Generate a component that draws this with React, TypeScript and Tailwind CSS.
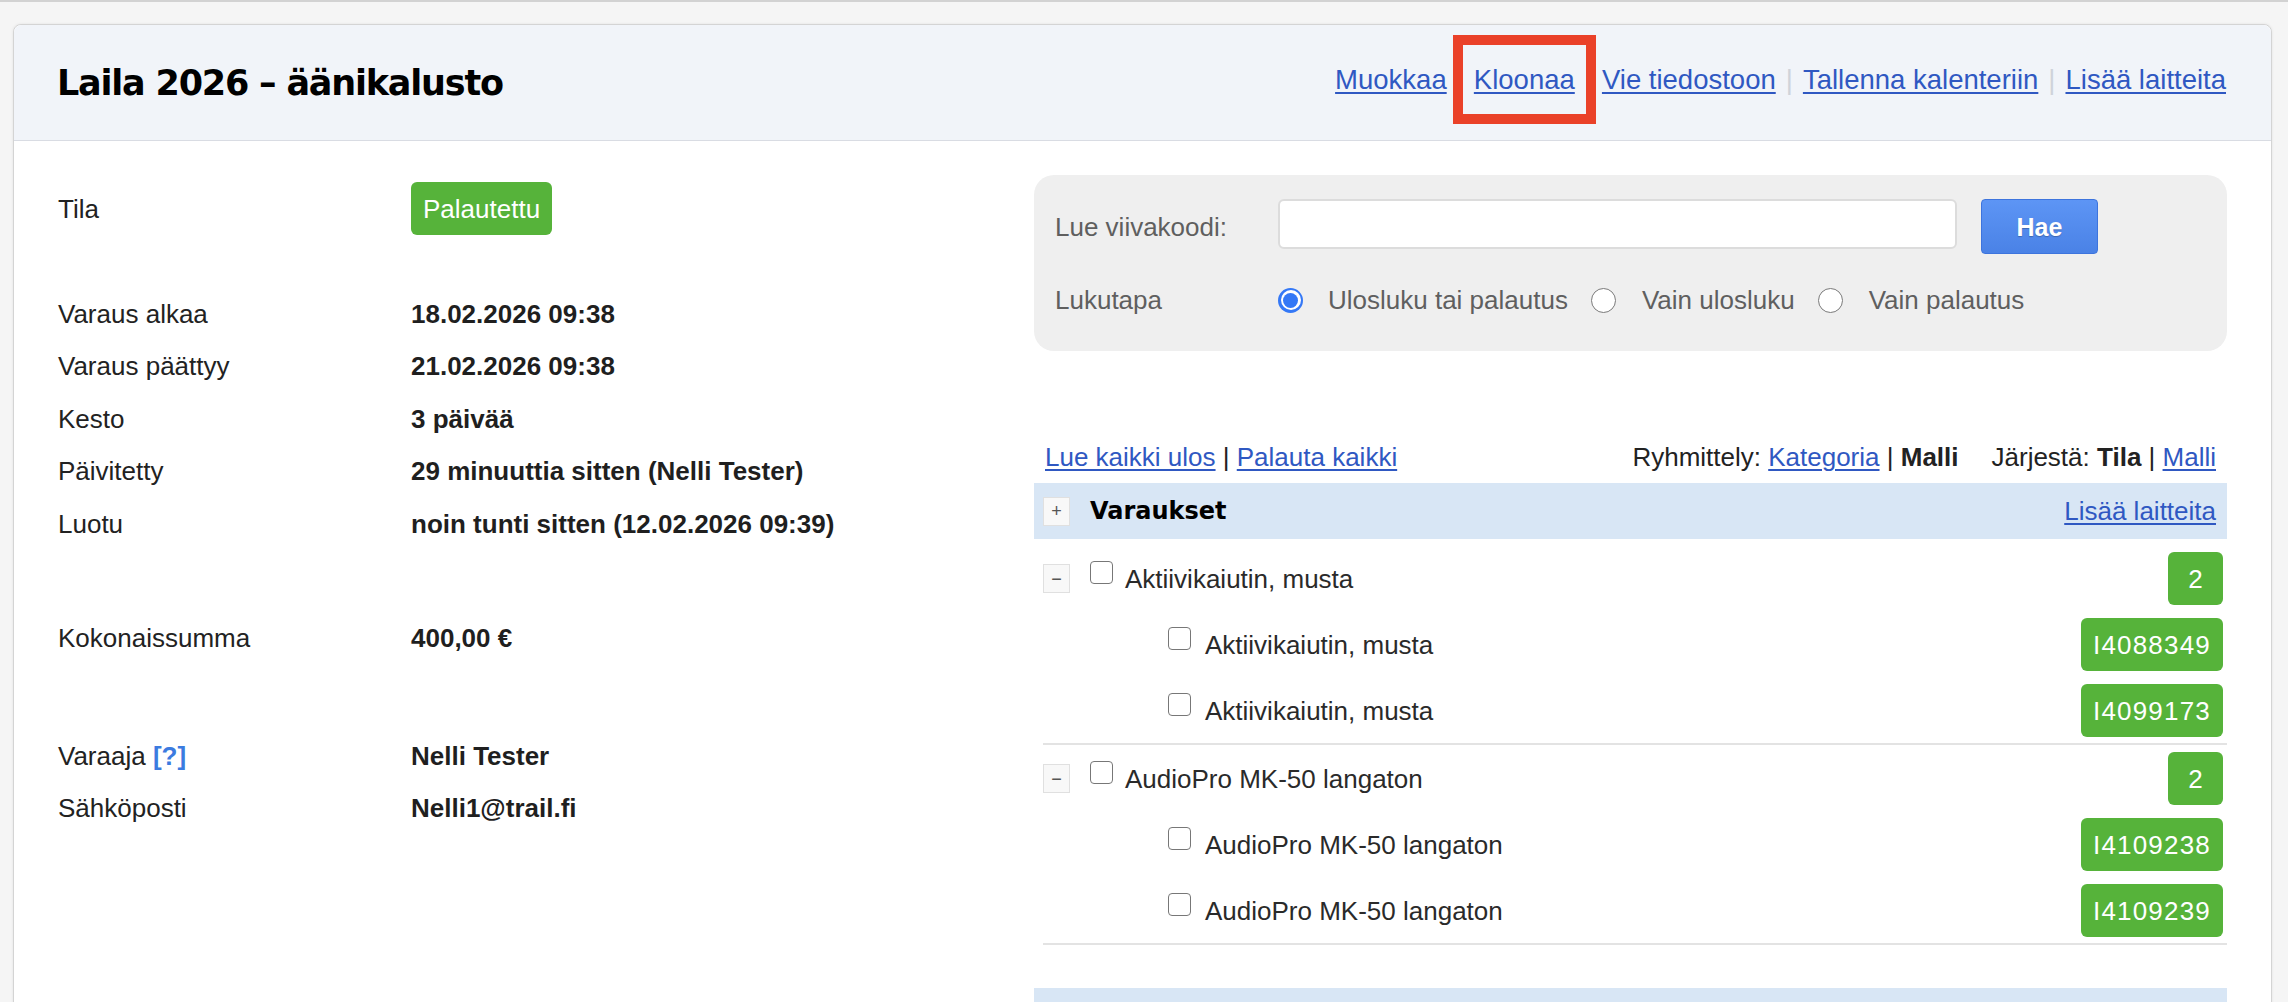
import React from 'react'

const SANS = 'font-["Liberation_Sans",Arial,sans-serif]'
const HEAD = 'font-["DejaVu_Sans",sans-serif]'

const LINK = 'text-[#2f58c2] underline underline-offset-[3px] decoration-[2px]'

const HEADER_LINKS = ['Muokkaa', 'Kloonaa', 'Vie tiedostoon', 'Tallenna kalenteriin', 'Lisää laitteita']

const GROUPS = [
  {
    name: 'Aktiivikaiutin, musta',
    count: 2,
    items: [
      { name: 'Aktiivikaiutin, musta', code: 'I4088349' },
      { name: 'Aktiivikaiutin, musta', code: 'I4099173' },
    ],
  },
  {
    name: 'AudioPro MK-50 langaton',
    count: 2,
    items: [
      { name: 'AudioPro MK-50 langaton', code: 'I4109238' },
      { name: 'AudioPro MK-50 langaton', code: 'I4109239' },
    ],
  },
]

function InfoRow({ label, children }: { label: React.ReactNode; children: React.ReactNode }) {
  return (
    <div className="flex items-center h-[52.5px]">
      <div className="w-[353px] shrink-0 text-[#222]">{label}</div>
      <div className="font-bold text-[#1f1f1f]">{children}</div>
    </div>
  )
}

function Checkbox() {
  return <span className="inline-block w-[23px] h-[23px] rounded-[4px] border-[1.5px] border-[#777] bg-white shrink-0" />
}

function ToggleBox({ sign }: { sign: string }) {
  return (
    <span className="w-[27px] h-[29px] shrink-0 flex items-center justify-center bg-[#f8f8f8] border border-[#e0e0e0] text-[#555] text-[18px] leading-none">
      {sign}
    </span>
  )
}

function Radio({ checked }: { checked?: boolean }) {
  if (checked) {
    return (
      <span className="w-[25px] h-[25px] rounded-full bg-[#3478f6] flex items-center justify-center shrink-0">
        <span className="w-[20px] h-[20px] rounded-full bg-white flex items-center justify-center">
          <span className="w-[15px] h-[15px] rounded-full bg-[#3478f6]" />
        </span>
      </span>
    )
  }
  return <span className="w-[25px] h-[25px] rounded-full border-[1.5px] border-[#7a7a7a] bg-white shrink-0" />
}

function GreenBadge({ children, id }: { children: React.ReactNode; id?: boolean }) {
  return (
    <span
      className={`h-[53px] min-w-[55px] flex items-center justify-center rounded-[6px] bg-[#56b33a] text-white ${
        id ? 'px-[12px] tracking-[1.2px]' : 'px-[18px]'
      }`}
    >
      {children}
    </span>
  )
}

export default function App() {
  return (
    <div className={`h-[1002px] overflow-hidden bg-[#f5f5f5] border-t-2 border-[#d2d2d2] pt-[22px] pl-[13px] pr-[16px] text-[26px] leading-[32px] ${SANS}`}>
      <div className="bg-white border border-[#d4d4d4] rounded-t-[8px] shadow-[0_0_3px_rgba(0,0,0,0.08)] min-h-[1200px]">
        {/* Header */}
        <div className="h-[116px] flex items-center justify-between pl-[43px] pr-[45px] bg-[#f1f4f9] border-b border-[#d9dce3] rounded-t-[8px]">
          <h1 className={`${HEAD} font-bold text-[35px] tracking-[-1.2px] text-black`}>Laila 2026 – äänikalusto</h1>
          <div className="flex items-center pb-[6px] text-[27.5px]">
            {HEADER_LINKS.map((l, i) => (
              <React.Fragment key={l}>
                {i > 0 && <span className="mx-[10px] text-[#cfd3da]">|</span>}
                {l === 'Kloonaa' ? (
                  <span className="relative">
                    <a className={LINK}>{l}</a>
                    <span className="absolute left-[-21px] top-[-29px] w-[143px] h-[89px] border-[10px] border-[#ea4129]" />
                  </span>
                ) : (
                  <a className={LINK}>{l}</a>
                )}
              </React.Fragment>
            ))}
          </div>
        </div>

        {/* Body */}
        <div className="grid grid-cols-[976px_1fr] px-[44px] pt-[34px]">
          {/* Left info */}
          <div className="pt-[7px]">
            <div className="flex items-center h-[53px]">
              <div className="w-[353px] shrink-0 text-[#222]">Tila</div>
              <span className="h-[53px] px-[12px] flex items-center rounded-[6px] bg-[#56b33a] text-white">Palautettu</span>
            </div>
            <div className="mt-[52.5px]">
              <InfoRow label="Varaus alkaa">18.02.2026 09:38</InfoRow>
              <InfoRow label="Varaus päättyy">21.02.2026 09:38</InfoRow>
              <InfoRow label="Kesto">3 päivää</InfoRow>
              <InfoRow label="Päivitetty">29 minuuttia sitten (Nelli Tester)</InfoRow>
              <InfoRow label="Luotu">noin tunti sitten (12.02.2026 09:39)</InfoRow>
            </div>
            <div className="mt-[62px]">
              <InfoRow label="Kokonaissumma">400,00 €</InfoRow>
            </div>
            <div className="mt-[65px]">
              <InfoRow
                label={
                  <>
                    Varaaja <span className="text-[#3b7be0] font-bold">[?]</span>
                  </>
                }
              >
                Nelli Tester
              </InfoRow>
              <InfoRow label="Sähköposti">Nelli1@trail.fi</InfoRow>
            </div>
          </div>

          {/* Right column */}
          <div>
            <div className="bg-[#efefef] rounded-[20px] pt-[24px] pb-[35px] px-[21px] text-[#5f5f5f]">
              <div className="flex items-start h-[55px]">
                <span className="w-[223px] shrink-0 self-center">Lue viivakoodi:</span>
                <span className="w-[679px] h-[50px] bg-white border-2 border-[#dcdcdc] rounded-[6px]" />
                <button className="ml-[24px] w-[117px] h-[55px] rounded-[4px] border border-[#3d74dd] bg-gradient-to-b from-[#5d95f5] to-[#4a82e6] text-white font-bold text-[25px] [text-shadow:0_1px_1px_rgba(0,0,0,0.25)]">
                  Hae
                </button>
              </div>
              <div className="flex items-center h-[32px] mt-[30px]">
                <span className="w-[223px] shrink-0">Lukutapa</span>
                <Radio checked />
                <span className="ml-[25px] mr-[23px]">Ulosluku tai palautus</span>
                <Radio />
                <span className="ml-[26px] mr-[23px]">Vain ulosluku</span>
                <Radio />
                <span className="ml-[26px]">Vain palautus</span>
              </div>
            </div>

            <div className="mt-[90px] flex items-center justify-between px-[11px] text-[#222]">
              <span>
                <a className={LINK}>Lue kaikki ulos</a> | <a className={LINK}>Palauta kaikki</a>
              </span>
              <span className="flex">
                <span>
                  Ryhmittely: <a className={LINK}>Kategoria</a> | <b>Malli</b>
                </span>
                <span className="ml-[33px]">
                  Järjestä: <b>Tila</b> | <a className={LINK}>Malli</a>
                </span>
              </span>
            </div>

            <div className="mt-[10px] h-[56px] bg-[#d8e6f5] flex items-center pl-[9px] pr-[11px]">
              <ToggleBox sign="+" />
              <span className={`${HEAD} ml-[20px] font-bold text-[24px] text-black`}>Varaukset</span>
              <a className={`${LINK} ml-auto`}>Lisää laitteita</a>
            </div>

            <div className="pt-[6px] text-[#2a2a2a]">
              {GROUPS.map(g => (
                <div key={g.name} className="pt-[7px] pb-[6px] border-b-2 border-[#e3e3e3] ml-[9px] pr-[4px] flex flex-col gap-[13px]">
                  <div className="h-[53px] flex items-center">
                    <ToggleBox sign="−" />
                    <span className="ml-[20px] mb-[8px]">
                      <Checkbox />
                    </span>
                    <span className="ml-[12px]">{g.name}</span>
                    <span className="ml-auto">
                      <GreenBadge>{g.count}</GreenBadge>
                    </span>
                  </div>
                  {g.items.map(it => (
                    <div key={it.code} className="h-[53px] flex items-center pl-[125px]">
                      <span className="mb-[8px]">
                        <Checkbox />
                      </span>
                      <span className="ml-[14px]">{it.name}</span>
                      <span className="ml-auto">
                        <GreenBadge id>{it.code}</GreenBadge>
                      </span>
                    </div>
                  ))}
                </div>
              ))}
            </div>

            <div className="mt-[43px] h-[56px] bg-[#d8e6f5]" />
          </div>
        </div>
      </div>
    </div>
  )
}
